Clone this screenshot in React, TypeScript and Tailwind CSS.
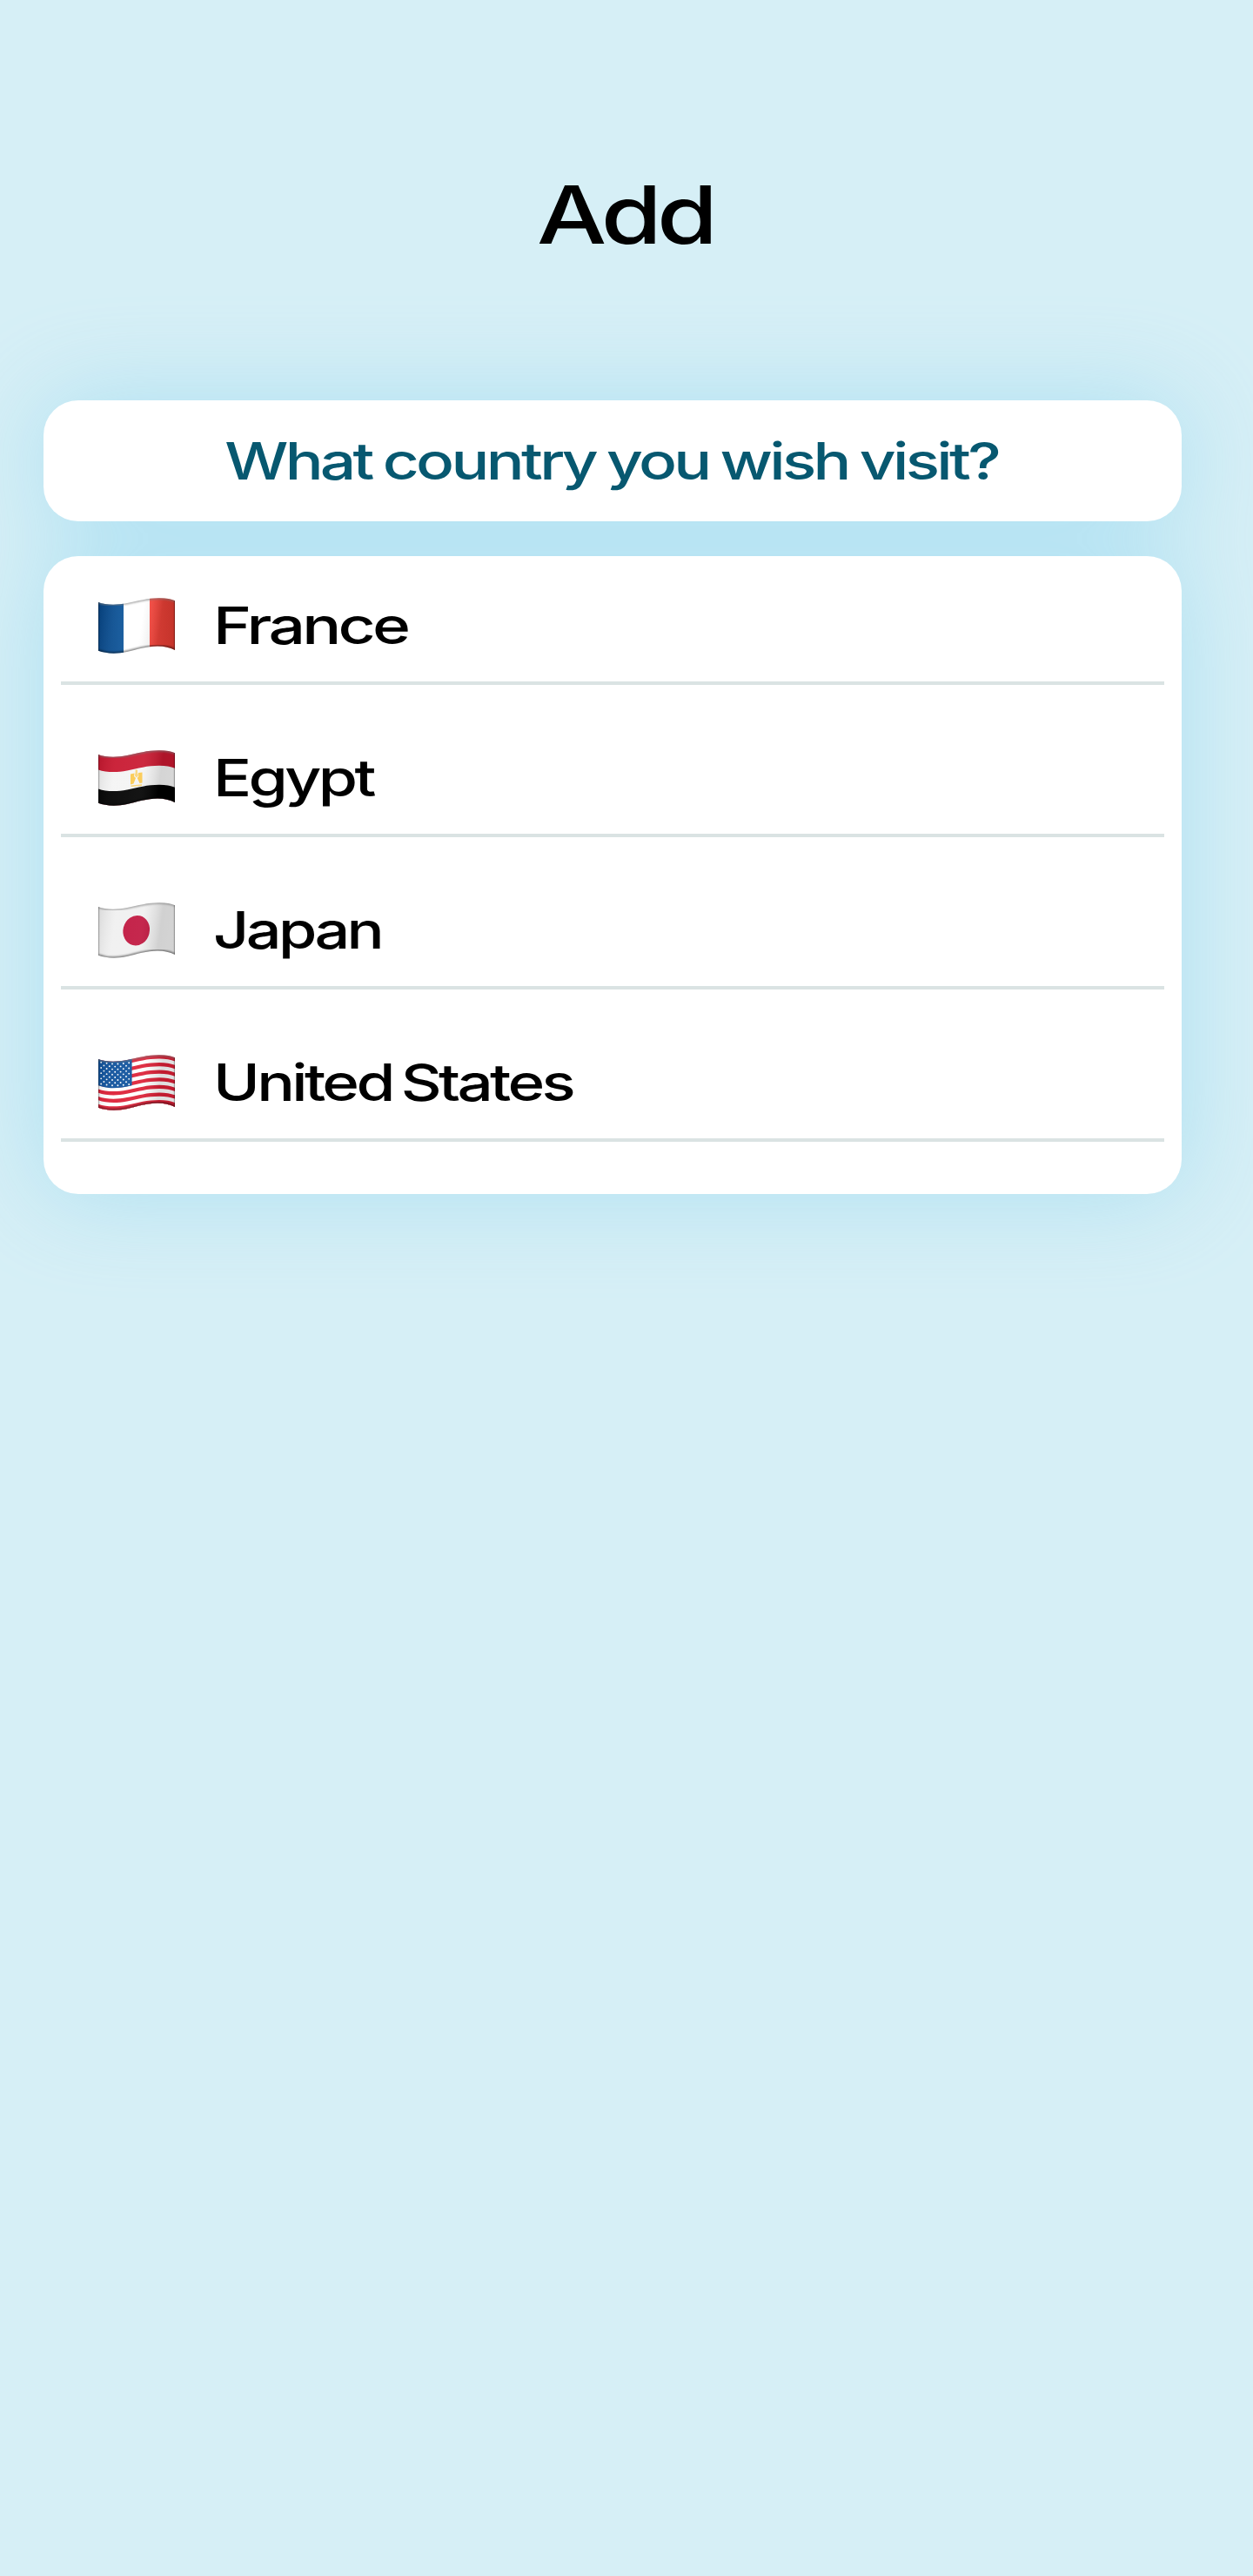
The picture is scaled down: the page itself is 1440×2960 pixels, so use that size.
import type { ReactNode } from "react";

const WAVE = "M-1 4.6 C8 8 20 8.6 33 6 C46 3.4 56 0.3 70 0.3 C78 0.3 84 1.6 89 3.6";
const BAND = WAVE + " V80 H-1 Z";
const OUTLINE =
  "M0 5 C8 8 20 8.6 33 6 C46 3.4 56 0.3 70 0.3 C78 0.3 84 1.6 88 3.3 V60 C82 57 76 55.5 68 55.5 C56 55.5 44 59.5 33 62 C20 64.8 8 63.8 0 60.8 Z";

function Band({ y, fill }: { y: number; fill: string }) {
  return <path d={BAND} transform={`translate(0 ${y})`} fill={fill} />;
}

function Flag({ id, children }: { id: string; children: ReactNode }) {
  return (
    <svg viewBox="0 0 88 64" className="h-16 w-[88px] shrink-0">
      <defs>
        <clipPath id={`${id}-clip`}>
          <path d={OUTLINE} />
        </clipPath>
        <linearGradient id={`${id}-fold`} x1="0" x2="1" y1="0" y2="0.1">
          <stop offset="0" stopColor="#000" stopOpacity="0.1" />
          <stop offset="0.25" stopColor="#fff" stopOpacity="0.06" />
          <stop offset="0.6" stopColor="#fff" stopOpacity="0.08" />
          <stop offset="0.85" stopColor="#000" stopOpacity="0.13" />
          <stop offset="1" stopColor="#000" stopOpacity="0.12" />
        </linearGradient>
        <filter id={`${id}-soft`} x="-10%" y="-10%" width="120%" height="120%">
          <feGaussianBlur stdDeviation="0.9" />
        </filter>
      </defs>
      <g clipPath={`url(#${id}-clip)`}>
        {children}
        <rect width="88" height="64" fill={`url(#${id}-fold)`} />
        <path d={WAVE} fill="none" stroke="#777" strokeOpacity="0.7" strokeWidth="2.6" filter={`url(#${id}-soft)`} />
        <path
          d="M0 60.8 C8 63.8 20 64.8 33 62 C44 59.5 56 55.5 68 55.5 C76 55.5 82 57 88 60"
          fill="none"
          stroke="#000"
          strokeOpacity="0.5"
          strokeWidth="3"
          filter={`url(#${id}-soft)`}
        />
        <path d="M0 0 V64 M88 0 V64" stroke="#000" strokeOpacity="0.28" strokeWidth="2.4" />
      </g>
    </svg>
  );
}

function FranceFlag() {
  return (
    <Flag id="fr">
      <defs>
        <linearGradient id="fr-blue">
          <stop offset="0" stopColor="#044384" />
          <stop offset="1" stopColor="#0c5499" />
        </linearGradient>
        <linearGradient id="fr-red">
          <stop offset="0" stopColor="#fb483f" />
          <stop offset="1" stopColor="#de3a30" />
        </linearGradient>
      </defs>
      <rect width="29" height="64" fill="url(#fr-blue)" />
      <rect x="29" width="30" height="64" fill="#fff" />
      <rect x="59" width="29" height="64" fill="url(#fr-red)" />
    </Flag>
  );
}

function EgyptFlag() {
  return (
    <Flag id="eg">
      <Band y={-4} fill="#c8172f" />
      <Band y={17.5} fill="#f4f4f4" />
      <Band y={39.5} fill="#000" />
      <g fill="#fbc94f">
        <path d="M37 27.5 L41.5 26.5 L41 30 L43 32 L40.5 38.5 L37 39.5 Z" />
        <path d="M50.5 25.5 L46 26 L46.3 30 L44.8 32 L47.5 38 L50.5 37.5 Z" />
        <path d="M42.6 22.5 H45 V26 L46 29 L44 31.5 L41.8 29 L42.6 26 Z" opacity="0.75" />
        <path d="M37.5 40.5 L50 39.2 V41 L37.5 42 Z" opacity="0.8" />
      </g>
    </Flag>
  );
}

function JapanFlag() {
  return (
    <Flag id="jp">
      <rect width="88" height="64" fill="#f0f0f0" />
      <ellipse cx="43.7" cy="32.2" rx="15.2" ry="17.4" transform="rotate(14 43.7 32.2)" fill="#c0153e" />
    </Flag>
  );
}

function UnitedStatesFlag() {
  const stripe = 56 / 13;
  const stars: [number, number][] = [];
  for (let row = 0; row < 9; row++) {
    const count = row % 2 === 0 ? 6 : 5;
    for (let col = 0; col < count; col++) {
      const x = (row % 2 === 0 ? 3.2 : 6.4) + col * 6.4;
      const sag = 5.2 + 2.3 * Math.sin((Math.min(x, 34) / 34) * Math.PI * 0.85);
      stars.push([x, sag + 3 + row * 3.1]);
    }
  }
  return (
    <Flag id="us">
      {Array.from({ length: 13 }, (_, i) => (
        <Band key={i} y={i === 0 ? -3 : i * stripe} fill={i % 2 === 0 ? "#dd1f36" : "#fff"} />
      ))}
      <path d="M0 0 H38.6 V35.2 C30 37.4 20 38.8 12 38 C7 37.4 3 36.4 0 35.2 Z" fill="#0f529d" />
      {stars.map(([x, y]) => (
        <circle key={`${x}-${y}`} cx={x} cy={y} r="0.95" fill="#fff" />
      ))}
    </Flag>
  );
}

const countries = [
  { name: "France", flag: <FranceFlag />, fit: "scale-x-[1.27]" },
  { name: "Egypt", flag: <EgyptFlag />, fit: "scale-x-[1.242]" },
  { name: "Japan", flag: <JapanFlag />, fit: "scale-x-[1.217]" },
  { name: "United States", flag: <UnitedStatesFlag />, fit: "scale-x-[1.232]" },
];

export default function App() {
  return (
    <main className="min-h-[2960px] w-[1440px] overflow-hidden bg-[#d6eff6] font-['Inter',sans-serif] font-medium text-black">
      <h1 className="mt-[187px] pr-1 text-center text-[92px] leading-[120px] tracking-[-0.05em]">
        <span className="inline-block scale-x-[1.23]">Add</span>
      </h1>

      <div className="mt-[153px] ml-[50px] flex w-[1308px] flex-col gap-10 drop-shadow-[0_0_54px_rgba(126,208,238,0.46)]">
        <div className="flex h-[139px] items-center justify-center rounded-[40px] bg-white pr-0.5 pb-px text-[59px] leading-none tracking-[-0.05em] whitespace-nowrap text-[#075870] [word-spacing:-0.04em]">
          <span className="inline-block scale-x-[1.236]">What country you wish visit?</span>
        </div>

        <ul className="flex flex-col gap-[27px] rounded-[40px] bg-white px-5 pb-[60px]">
          {countries.map(({ name, flag, fit }) => (
            <li key={name} className="flex h-[148px] items-center gap-[44px] border-b-4 border-[#dae3e3] pt-4 pl-[43px]">
              {flag}
              <span
                className={`inline-block origin-left pb-0.5 text-[59px] leading-none tracking-[-0.05em] whitespace-nowrap [word-spacing:-0.08em] ${fit}`}
              >
                {name}
              </span>
            </li>
          ))}
        </ul>
      </div>
    </main>
  );
}
